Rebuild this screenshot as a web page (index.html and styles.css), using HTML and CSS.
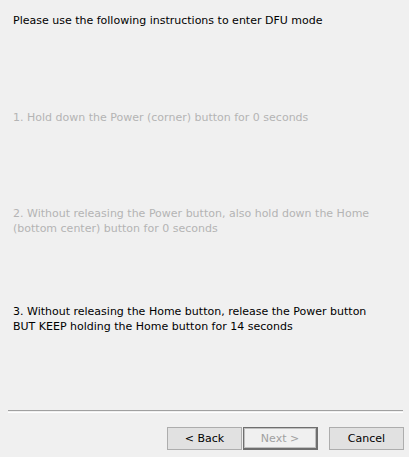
FILE: index.html
```html
<!DOCTYPE html>
<html>
<head>
<meta charset="utf-8">
<link rel="stylesheet" href="styles.css">
</head>
<body>
<div class="page">
  <div class="content">
    <p class="title">Please use the following instructions to enter DFU mode</p>
    <p class="step step1 disabled">1. Hold down the Power (corner) button for 0 seconds</p>
    <p class="step step2 disabled">2. Without releasing the Power button, also hold down the Home<br>(bottom center) button for 0 seconds</p>
    <p class="step step3">3. Without releasing the Home button, release the Power button<br>BUT KEEP holding the Home button for 14 seconds</p>
  </div>
  <div class="separator"></div>
  <div class="buttons">
    <button class="btn">&lt; Back</button>
    <button class="btn default" disabled>Next &gt;</button>
    <button class="btn cancel">Cancel</button>
  </div>
</div>
</body>
</html>
```
FILE: styles.css
```css
html, body {
  margin: 0;
  padding: 0;
  background: #f0f0f0;
}
.page {
  width: 409px;
  height: 457px;
  display: flex;
  flex-direction: column;
  font-family: "DejaVu Sans", sans-serif;
  font-size: 11px;
  line-height: 15px;
  color: #000;
}
.content {
  height: 397px;
  padding: 13px 13px 0 13px;
  box-sizing: border-box;
}
.content p {
  margin: 0;
  white-space: nowrap;
}
.step1 { margin-top: 82px !important; }
.step2 { margin-top: 81px !important; }
.step3 { margin-top: 68px !important; }
.disabled { color: #b4b4b4; }
.separator {
  margin: 0 6px 0 8px;
  height: 1px;
  border-top: 1px solid #a0a0a0;
  border-bottom: 1px solid #ffffff;
  margin-top: 13px;
}
.buttons {
  display: flex;
  justify-content: flex-end;
  padding: 14px 5px 0 0;
}
.btn {
  width: 75px;
  height: 23px;
  box-sizing: border-box;
  font-family: inherit;
  font-size: 11px;
  background: #e1e1e1;
  border: 1px solid #adadad;
  color: #000;
  padding: 0;
  margin: 0;
}
.btn.default {
  margin-left: 1px;
  color: #a0a0a0;
  background: #f0f0f0;
  border: 1px solid #6f6f6f;
  border-bottom-width: 2px;
  border-right-width: 2px;
  box-shadow: inset 1px 1px 0 #bfbfbf, inset -1px -1px 0 #bfbfbf;
}
.btn.cancel {
  margin-left: 11px;
}
```
